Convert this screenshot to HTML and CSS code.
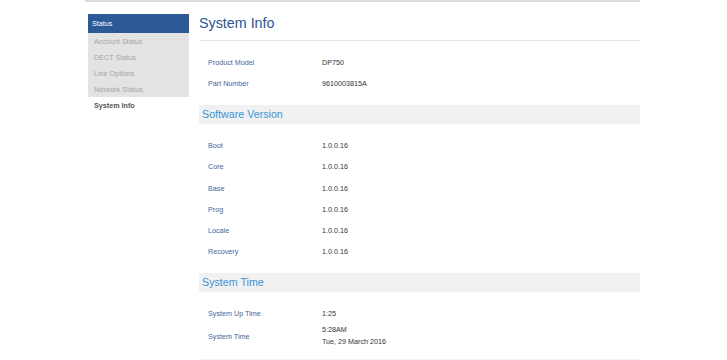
FILE: index.html
```html
<!DOCTYPE html>
<html lang="en">
<head>
    <meta charset="UTF-8">
    <title>System Info</title>
    <link rel="stylesheet" href="styles.css">
</head>
<body>
    <div class="topbar"></div>
    <div class="page">
        <div class="side">
            <div class="side-title">Status</div>
            <ul class="side-list">
                <li>Account Status</li>
                <li>DECT Status</li>
                <li>Line Options</li>
                <li>Network Status</li>
            </ul>
            <div class="side-active">System Info</div>
        </div>
        <div class="main">
            <h1 class="title">System Info</h1>
            <table class="info">
                <tr><td class="label">Product Model</td><td>DP750</td></tr>
                <tr><td class="label">Part Number</td><td>9610003815A</td></tr>
            </table>
            <h2 class="section">Software Version</h2>
            <table class="info">
                <tr><td class="label">Boot</td><td>1.0.0.16</td></tr>
                <tr><td class="label">Core</td><td>1.0.0.16</td></tr>
                <tr><td class="label">Base</td><td>1.0.0.16</td></tr>
                <tr><td class="label">Prog</td><td>1.0.0.16</td></tr>
                <tr><td class="label">Locale</td><td>1.0.0.16</td></tr>
                <tr><td class="label">Recovery</td><td>1.0.0.16</td></tr>
            </table>
            <h2 class="section">System Time</h2>
            <table class="info">
                <tr><td class="label">System Up Time</td><td>1:25</td></tr>
                <tr><td class="label">System Time</td><td class="two">5:28AM<br>Tue, 29 March 2016</td></tr>
            </table>
            <h2 class="section"></h2>
        </div>
    </div>
</body>
</html>
```

FILE: styles.css
```css
body,
ul,
h1,
h2{
    padding: 0;
    margin: 0;
}
ul{
    list-style: none;
}
html,
body{
    height: 360px;
    overflow: hidden;
}
body{
    font-family: "Liberation Sans", Arial, sans-serif;
    background-color: #fff;
}
.topbar{
    width: 555px;
    height: 2px;
    margin-left: 85px;
    background-color: #dcdcdc;
}
.page{
    display: flex;
    gap: 10px;
    width: 552px;
    margin-left: 88px;
    padding-top: 12px;
}
.side{
    width: 101px;
    flex-shrink: 0;
}
.side-title{
    height: 19px;
    line-height: 20px;
    padding-left: 4px;
    font-size: 7.2px;
    color: #fff;
    background-color: #2d5a97;
}
.side-list{
    background-color: #e3e3e3;
}
.side-list li{
    height: 16px;
    line-height: 17px;
    padding-left: 6px;
    font-size: 7.2px;
    color: #a3a3a3;
}
.side-active{
    height: 16px;
    line-height: 17px;
    padding-left: 6px;
    font-size: 7.2px;
    font-weight: bold;
    color: #555;
}
.main{
    flex: 1;
}
.title{
    height: 26px;
    line-height: 19px;
    font-size: 14.3px;
    font-weight: normal;
    color: #2e5594;
    border-bottom: 1px solid #e6e6e6;
}
.info{
    border-collapse: collapse;
    margin: 11px 0 10.8px;
}
.info td{
    height: 21.2px;
    padding: 0;
    font-size: 7.2px;
    color: #333;
}
.info .label{
    width: 114px;
    padding-left: 9px;
    color: #45659c;
}
.info .two{
    line-height: 12px;
}
.section{
    height: 19px;
    line-height: 19px;
    padding-left: 3px;
    font-size: 10.7px;
    font-weight: normal;
    color: #3a94d6;
    background-color: #f1f1f1;
}
```
